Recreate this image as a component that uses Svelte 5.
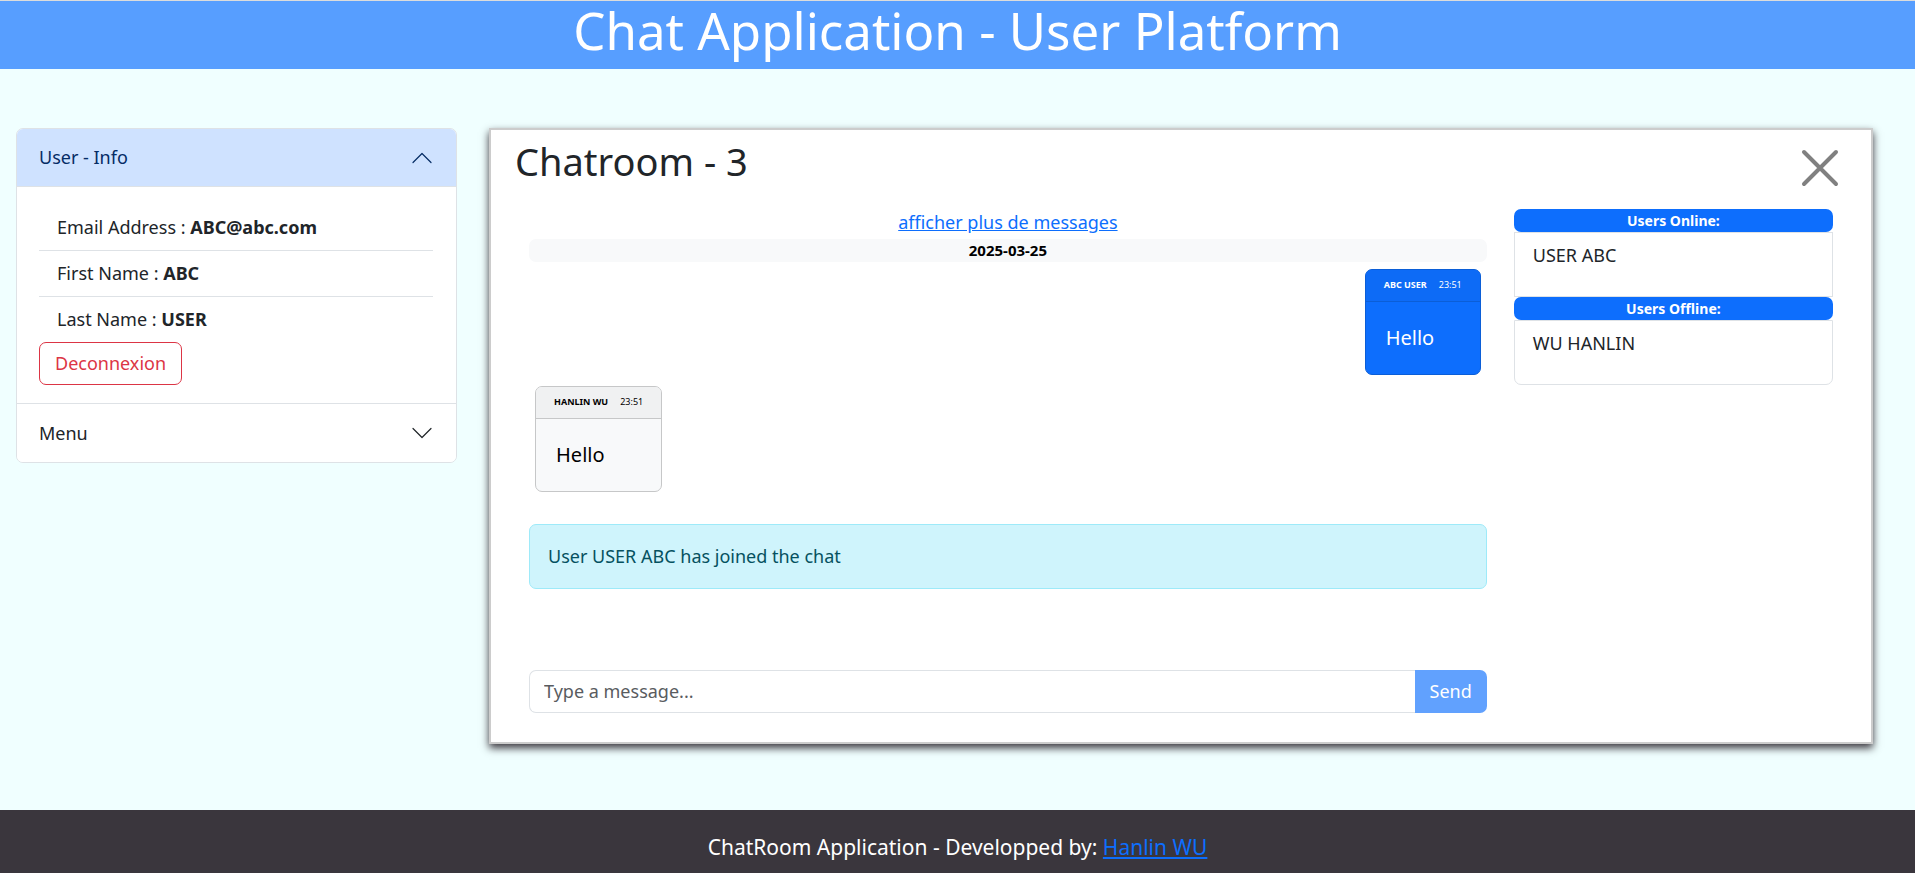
<script>
  let infoOpen = $state(true);
  let menuOpen = $state(false);
  let draft = $state('');

  const profile = [
    { label: 'Email Address', value: 'ABC@abc.com' },
    { label: 'First Name', value: 'ABC' },
    { label: 'Last Name', value: 'USER' }
  ];

  const messages = [
    { author: 'ABC USER', time: '23:51', text: 'Hello', mine: true },
    { author: 'HANLIN WU', time: '23:51', text: 'Hello', mine: false }
  ];

  const groups = [
    { title: 'Users Online:', users: ['USER ABC'] },
    { title: 'Users Offline:', users: ['WU HANLIN'] }
  ];
</script>

{#snippet chevron()}
  <svg class="chevron" viewBox="0 0 16 16" aria-hidden="true">
    <path d="M2 5l6 6 6-6" />
  </svg>
{/snippet}

<div class="page">
  <header class="banner">
    <h1>Chat Application - User Platform</h1>
  </header>

  <div class="content">
    <aside class="accordion">
      <section>
        <button class="toggle" class:open={infoOpen} aria-expanded={infoOpen} onclick={() => (infoOpen = !infoOpen)}>
          <span>User - Info</span>
          {@render chevron()}
        </button>
        {#if infoOpen}
          <div class="details">
            <ul>
              {#each profile as item}
                <li>{item.label} : <strong>{item.value}</strong></li>
              {/each}
            </ul>
            <button class="logout">Deconnexion</button>
          </div>
        {/if}
      </section>
      <section>
        <button class="toggle" class:open={menuOpen} aria-expanded={menuOpen} onclick={() => (menuOpen = !menuOpen)}>
          <span>Menu</span>
          {@render chevron()}
        </button>
      </section>
    </aside>

    <main class="room">
      <div class="room-head">
        <h2>Chatroom - 3</h2>
        <button class="close" aria-label="Close">
          <svg viewBox="0 0 40 40" aria-hidden="true"><path d="M4 4l32 32M36 4L4 36" /></svg>
        </button>
      </div>

      <div class="room-body">
        <div class="chat">
          <a class="more" href="#more">afficher plus de messages</a>
          <div class="day">2025-03-25</div>
          <div class="messages">
            {#each messages as message}
              <article class="message" class:mine={message.mine}>
                <header><strong>{message.author}</strong><time>{message.time}</time></header>
                <p>{message.text}</p>
              </article>
            {/each}
          </div>
          <div class="notice" role="status">User USER ABC has joined the chat</div>
          <form class="composer" onsubmit={(event) => event.preventDefault()}>
            <input type="text" aria-label="Message" placeholder="Type a message..." bind:value={draft} />
            <button disabled={!draft}>Send</button>
          </form>
        </div>

        <aside class="users">
          {#each groups as group}
            <h3>{group.title}</h3>
            <ul>
              {#each group.users as user}
                <li>{user}</li>
              {/each}
            </ul>
          {/each}
        </aside>
      </div>
    </main>
  </div>

  <footer>ChatRoom Application - Developped by: <a href="#author">Hanlin WU</a></footer>
</div>

<style>
  :global(body) {
    background: #f0ffff;
  }

  .page {
    display: flex;
    flex-direction: column;
    min-height: 100vh;
    box-sizing: border-box;
    border-top: 1px solid #dcdcdc;
    font: 18px/27px 'Noto Sans', 'Open Sans', sans-serif;
    color: #212529;
  }

  .page :is(h1, h2, h3, p, ul) {
    margin: 0;
    padding: 0;
    font-weight: 400;
    list-style: none;
  }

  button,
  input {
    font: inherit;
    box-sizing: border-box;
  }

  button {
    cursor: pointer;
  }

  a {
    color: #0d6efd;
  }

  .banner {
    height: 68px;
    background: #579eff;
    color: #fff;
    text-align: center;
  }

  .page .banner h1 {
    font-size: 51px;
    line-height: 58px;
  }

  .content {
    display: grid;
    grid-template-columns: 23.75% 1fr;
    gap: 32px;
    align-items: start;
    flex: 1;
    padding: 59px 42px 66px 16px;
  }

  .accordion {
    background: #fff;
    border: 1px solid #dee2e6;
    border-radius: 7px;
    overflow: hidden;
  }

  .accordion section + section {
    border-top: 1px solid #dee2e6;
  }

  .toggle {
    display: flex;
    align-items: center;
    justify-content: space-between;
    width: 100%;
    height: 58px;
    padding: 0 22px;
    border: 0;
    background: #fff;
    color: #212529;
  }

  .toggle.open {
    background: #cfe2ff;
    color: #052c65;
    border-bottom: 1px solid #dee2e6;
  }

  .chevron {
    width: 24px;
    height: 24px;
    fill: none;
    stroke: currentColor;
    stroke-width: 0.8;
    stroke-linecap: round;
    stroke-linejoin: round;
  }

  .open .chevron {
    transform: rotate(180deg);
  }

  .details {
    padding: 18px 23px 18px 22px;
  }

  .details li {
    padding: 9px 18px;
  }

  .details li + li {
    border-top: 1px solid #dee2e6;
  }

  .page strong {
    font-weight: 700;
  }

  .logout {
    height: 43px;
    padding: 0 15px;
    border: 1px solid #dc3545;
    border-radius: 7px;
    background: none;
    color: #dc3545;
  }

  .room {
    border: 2px solid #ccc;
    background: #fff;
    box-shadow: 0 4px 8px #3a363d;
  }

  .room-head {
    display: flex;
    justify-content: space-between;
    align-items: flex-start;
    padding: 10px 31px 0 24px;
  }

  .room-head h2 {
    font-size: 38px;
    line-height: 43px;
  }

  .close {
    width: 40px;
    height: 40px;
    margin-top: 8px;
    padding: 0;
    border: 0;
    background: none;
  }

  .close svg {
    display: block;
    fill: none;
    stroke: #808080;
    stroke-width: 4;
    stroke-linecap: round;
  }

  .room-body {
    display: grid;
    grid-template-columns: 3fr 1fr;
    gap: 27px;
    padding: 21px 38px 29px;
  }

  .chat {
    display: flex;
    flex-direction: column;
  }

  .more {
    align-self: center;
    margin-bottom: 3px;
  }

  .page .day,
  .page .users h3 {
    border-radius: 7px;
    font-size: 14px;
    font-weight: 700;
    line-height: 23px;
    text-align: center;
  }

  .page .day {
    background: #f8f9fa;
    color: #000;
    font-size: 15px;
  }

  .messages {
    display: flex;
    flex-direction: column;
    align-items: flex-start;
    gap: 11px;
    padding: 7px 6px 32px;
  }

  .message {
    border: 1px solid #c6c7c8;
    border-radius: 7px;
    background: #f8f9fa;
    color: #000;
    overflow: hidden;
  }

  .message.mine {
    align-self: flex-end;
    border-color: #0b5ed7;
    background: #0d6efd;
    color: #fff;
  }

  .message header {
    display: flex;
    gap: 12px;
    padding: 8px 18px 9px;
    border-bottom: 1px solid #c6c7c8;
    background: #f0f1f2;
    font-size: 9px;
    line-height: 14px;
  }

  .message.mine header {
    border-color: #0b5ed7;
    background: #0d6bf6;
  }

  .page .message p {
    padding: 22px 20px 23px;
    font-size: 20px;
    line-height: 27px;
  }

  .notice {
    margin-bottom: 81px;
    padding: 18px;
    border: 1px solid #9eeaf9;
    border-radius: 7px;
    background: #cff4fc;
    color: #055160;
  }

  .composer {
    display: flex;
  }

  .composer input {
    flex: 1;
    min-width: 0;
    height: 43px;
    padding: 0 14px 2px;
    border: 1px solid #dee2e6;
    border-right: 0;
    border-radius: 7px 0 0 7px;
    color: #212529;
  }

  .composer input::placeholder {
    color: #595c5f;
    opacity: 1;
  }

  .composer button {
    padding: 0 15px;
    border: 0;
    border-radius: 0 7px 7px 0;
    background: #0d6efd;
    color: #fff;
  }

  .composer button:disabled {
    background: #61a1fe;
  }

  .page .users h3 {
    background: #0d6efd;
    color: #fff;
  }

  .page .users ul {
    box-sizing: border-box;
    min-height: 65px;
    padding: 9px 18px;
    border: 1px solid #dee2e6;
  }

  .users ul:last-child {
    border-radius: 0 0 7px 7px;
  }

  footer {
    padding: 24px 16px 13px;
    background: #3a363d;
    color: #fff;
    font-size: 21px;
    text-align: center;
  }
</style>
